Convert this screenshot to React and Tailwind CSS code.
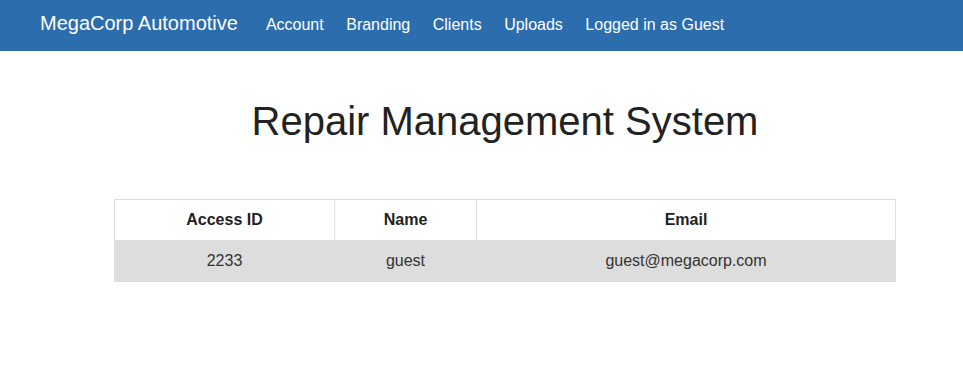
export default function App() {
  const links = ['Account', 'Branding', 'Clients', 'Uploads', 'Logged in as Guest']

  return (
    <div className="min-h-screen bg-white text-[#222] font-['Liberation_Sans',Arial,sans-serif]">
      {/* Navbar */}
      <nav className="h-[51px] bg-[#2c6dae] flex items-center pl-10 pb-[5px] text-white">
        <div className="flex items-baseline">
          <span className="text-[20px] leading-none mr-[28px]">MegaCorp Automotive</span>
          <div className="flex gap-[22.5px] text-[16px] leading-none">
            {links.map((l) => (
              <span key={l}>{l}</span>
            ))}
          </div>
        </div>
      </nav>

      <div className="pl-[114px] pr-[67px]">
        <h1 className="text-[40px] leading-none text-center pt-[50px] pb-[58px]">Repair Management System</h1>

        <table className="w-[782px] border-collapse text-[16px]">
          <thead>
            <tr className="h-[41px]">
              <th className="w-[220px] border border-[#dedede] font-bold">Access ID</th>
              <th className="w-[142px] border border-[#dedede] font-bold">Name</th>
              <th className="border border-[#dedede] font-bold">Email</th>
            </tr>
          </thead>
          <tbody className="text-[#333]">
            <tr className="h-[41px] bg-[#dddddd]">
              <td className="text-center border border-[#dddddd]">2233</td>
              <td className="text-center border border-[#dddddd]">guest</td>
              <td className="text-center border border-[#dddddd]">guest@megacorp.com</td>
            </tr>
          </tbody>
        </table>
      </div>
    </div>
  )
}
